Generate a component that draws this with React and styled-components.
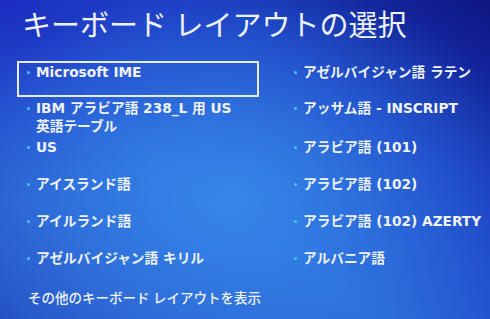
import React from "react";
import styled, { createGlobalStyle } from "styled-components";

const GlobalStyle = createGlobalStyle`
  html, body {
    margin: 0;
    padding: 0;
  }
  body {
    font-family: "Noto Sans", "Noto Sans CJK JP", sans-serif;
    color: #eef2fb;
  }
`;

const Screen = styled.div`
  width: 490px;
  height: 319px;
  overflow: hidden;
  box-sizing: border-box;
  padding: 7px 0 0 17px;
  background:
    radial-gradient(ellipse 300px 220px at 48% 62%, rgba(56, 140, 236, 0.85), rgba(56, 140, 236, 0) 100%),
    radial-gradient(ellipse 260px 200px at 0% 0%, rgba(26, 40, 190, 0.9), rgba(26, 40, 190, 0) 100%),
    linear-gradient(215deg, #0e1682 0%, #1a3cc0 30%, #2a66d8 60%, #2a5ed0 80%, #2650c2 100%);
`;

const Title = styled.h1`
  margin: 0 0 18px 5px;
  font-size: 29px;
  line-height: 36px;
  font-weight: 400;
  white-space: nowrap;
`;

const Grid = styled.ul`
  list-style: none;
  margin: 0;
  padding: 0;
  display: grid;
  grid-template-columns: 242px 215px;
  grid-template-rows: 36px 39px repeat(4, 37px);
  grid-auto-flow: column;
  column-gap: 25px;
`;

const Item = styled.li`
  position: relative;
  box-sizing: border-box;
  padding: 2px 4px 0 19px;
  font-family: "DejaVu Sans", "Noto Sans CJK JP", sans-serif;
  font-size: 13.7px;
  line-height: 18px;
  font-weight: 600;
  white-space: nowrap;
  outline: ${(p) => (p.$selected ? "2px solid #e6ecfa" : "none")};
  outline-offset: -2px;

  &::before {
    content: "";
    position: absolute;
    left: 10px;
    top: 10px;
    width: 3px;
    height: 3px;
    border-radius: 50%;
    background: #48c6f0;
  }
`;

const Line = styled.span`
  display: block;
`;

const MoreLink = styled.div`
  margin: 6px 0 0 11px;
  font-size: 13.5px;
  line-height: 17px;
  font-weight: 500;
  white-space: nowrap;
`;

const left = [
  ["Microsoft IME"],
  ["IBM アラビア語 238_L 用 US", "英語テーブル"],
  ["US"],
  ["アイスランド語"],
  ["アイルランド語"],
  ["アゼルバイジャン語 キリル"],
];

const right = [
  ["アゼルバイジャン語 ラテン"],
  ["アッサム語 - INSCRIPT"],
  ["アラビア語 (101)"],
  ["アラビア語 (102)"],
  ["アラビア語 (102) AZERTY"],
  ["アルバニア語"],
];

export default function App() {
  return (
    <>
      <GlobalStyle />
      <Screen>
        <Title>キーボード レイアウトの選択</Title>
        <Grid>
          {[...left, ...right].map((lines, i) => (
            <Item key={lines.join(" ")} $selected={i === 0}>
              {lines.map((l) => (
                <Line key={l}>{l}</Line>
              ))}
            </Item>
          ))}
        </Grid>
        <MoreLink>その他のキーボード レイアウトを表示</MoreLink>
      </Screen>
    </>
  );
}
